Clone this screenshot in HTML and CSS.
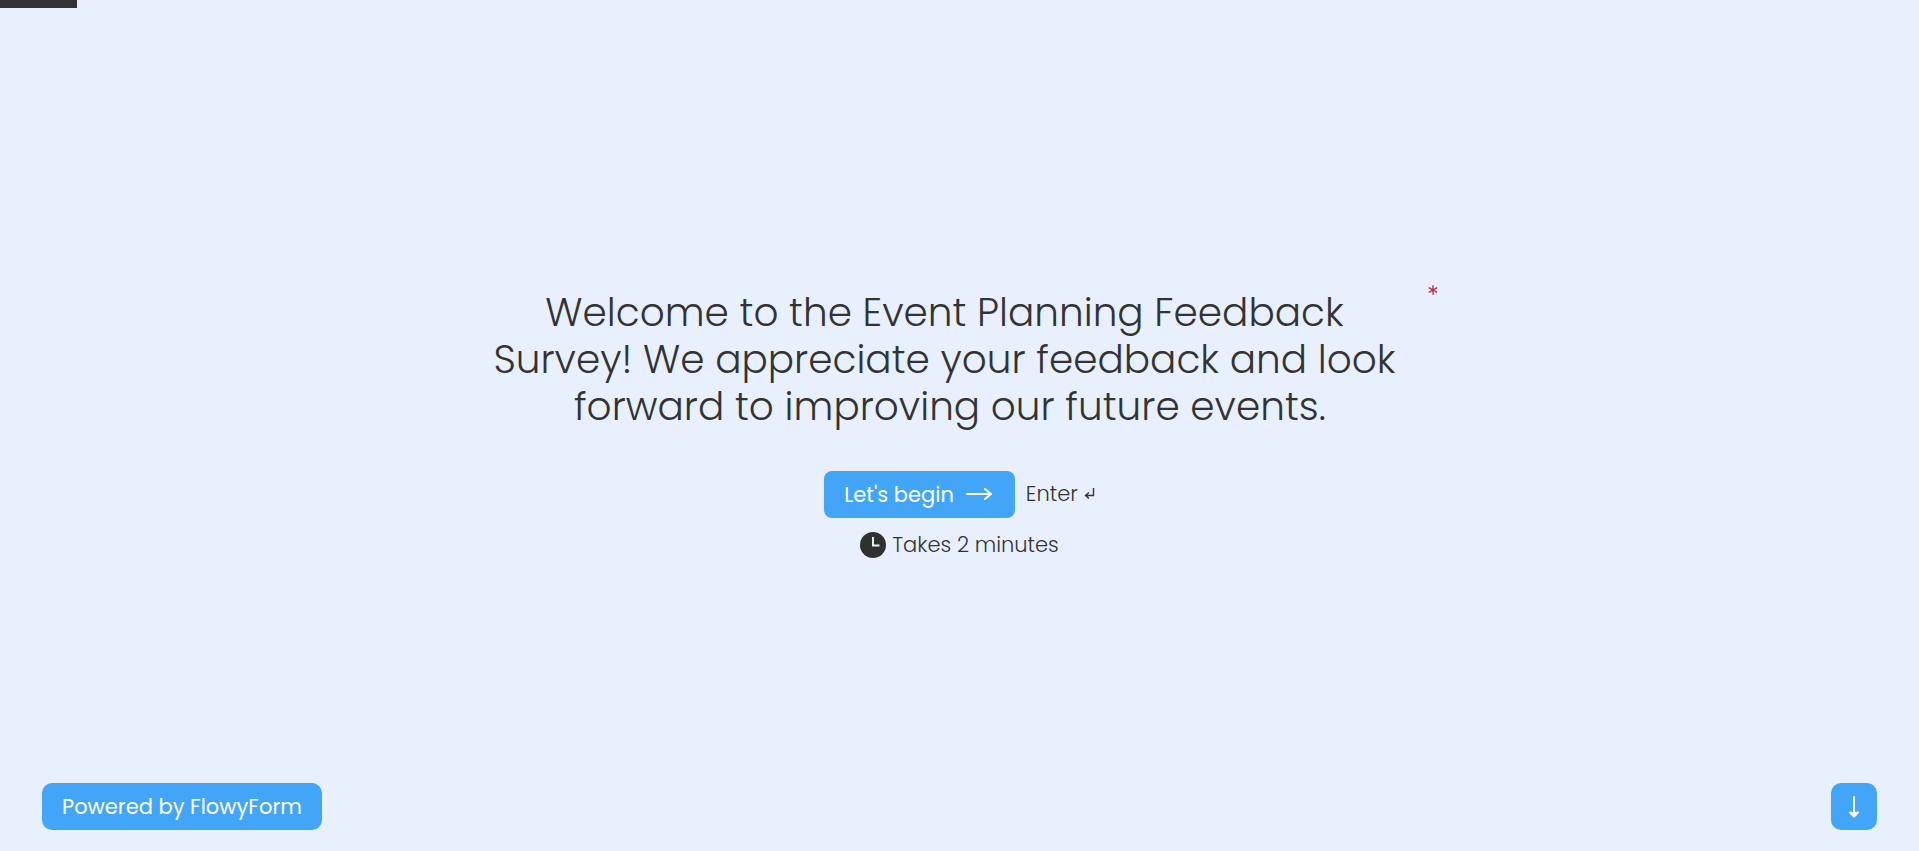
FILE: index.html
```html
<!DOCTYPE html>
<html lang="en">
<head>
<meta charset="utf-8">
<meta name="viewport" content="width=device-width, initial-scale=1">
<title>Event Planning Feedback Survey</title>
<link rel="stylesheet" href="styles.css">
</head>
<body>
<div class="page">
  <div class="progress"><div class="progress-bar" style="width: 4%"></div></div>
  <main class="welcome">
    <div class="question">
      <h1 class="title">Welcome to the Event Planning Feedback<br> Survey! We appreciate your feedback and look<br> &nbsp;forward to improving our future events.</h1>
      <svg class="required" role="img" aria-label="Required" viewBox="0 0 10 10"><path d="M5 .3v9.4M.8 2.7l8.4 4.6M9.2 2.7L.8 7.3"/></svg>
    </div>
    <div class="actions">
      <button class="btn" type="button">Let's begin
        <svg class="arrow" viewBox="0 0 26 14" aria-hidden="true"><path d="M1 7h24M19 2l6 5-6 5"/></svg>
      </button>
      <span class="hint">Enter
        <svg class="return" viewBox="0 0 11 13" aria-hidden="true"><path d="M9.500 0v7.500H2M5 4.500l-3.500 3L5 10.500"/></svg>
      </span>
    </div>
    <p class="duration">
      <svg class="clock" viewBox="0 0 26 26" aria-hidden="true"><circle cx="13" cy="13" r="13"/><path d="M13 5v8.500h6.500"/></svg>
      Takes 2 minutes
    </p>
  </main>
  <footer class="footer">
    <a class="btn brand" href="#">Powered by FlowyForm</a>
    <button class="btn next" type="button" aria-label="Next">
      <svg class="down" viewBox="0 0 12 22" aria-hidden="true"><path d="M6 1v18"/><path class="head" d="M2 16.500l4 4 4-4-4 1z"/></svg>
    </button>
  </footer>
</div>
</body>
</html>
```
FILE: styles.css
```css
* {
  box-sizing: border-box;
}

body {
  margin: 0;
  background: #e8f0fe;
  color: #333;
  font-family: Poppins, Inter, "Liberation Sans", sans-serif;
  font-weight: 300;
}

.page {
  display: grid;
  grid-template-rows: 8px 1fr auto;
  min-height: 100vh;
}

.progress-bar {
  height: 100%;
  background: #333;
}

.welcome {
  display: flex;
  flex-direction: column;
  align-items: center;
  justify-content: center;
  padding: 53px 24px 0;
}

.question {
  display: flex;
  align-items: flex-start;
  width: 100%;
  max-width: 956px;
}

.title {
  flex: 1;
  margin: 0;
  padding-top: 4px;
  font-size: 39px;
  line-height: 47px;
  font-weight: 300;
  text-align: center;
}

.required {
  width: 10px;
  height: 10px;
  margin-left: 20px;
  fill: none;
  stroke: #c4303a;
  stroke-width: 1.400;
}

.actions {
  display: flex;
  align-items: center;
  gap: 11px;
  margin-top: 41px;
}

.btn {
  display: inline-flex;
  align-items: center;
  height: 47px;
  padding: 0 20px;
  border: 0;
  border-radius: 8px;
  background: #42a5f7;
  color: #fff;
  font: inherit;
  font-size: 21px;
  font-weight: 400;
  text-decoration: none;
  cursor: pointer;
}

.arrow {
  width: 26px;
  height: 14px;
  margin-left: 12px;
  margin-right: 3px;
}

.arrow,
.down {
  fill: none;
  stroke: #fff;
  stroke-width: 2;
  stroke-linecap: round;
  stroke-linejoin: round;
}

.hint,
.duration {
  display: flex;
  align-items: center;
  gap: 6px;
  font-size: 21px;
  line-height: 30px;
}

.return {
  width: 11px;
  height: 13px;
  fill: none;
  stroke: #333;
  stroke-width: 1.400;
}

.duration {
  margin: 12px 0 0;
}

.clock {
  width: 26px;
  height: 26px;
  fill: #303030;
}

.clock path {
  fill: none;
  stroke: #e8f0fe;
  stroke-width: 2;
}

.footer {
  display: flex;
  justify-content: space-between;
  padding: 0 42px 21px;
}

.brand,
.next {
  border-radius: 10px;
}

.next {
  justify-content: center;
  width: 46px;
  padding: 0;
}

.down {
  width: 12px;
  height: 22px;
}

.head {
  fill: #fff;
}
```
